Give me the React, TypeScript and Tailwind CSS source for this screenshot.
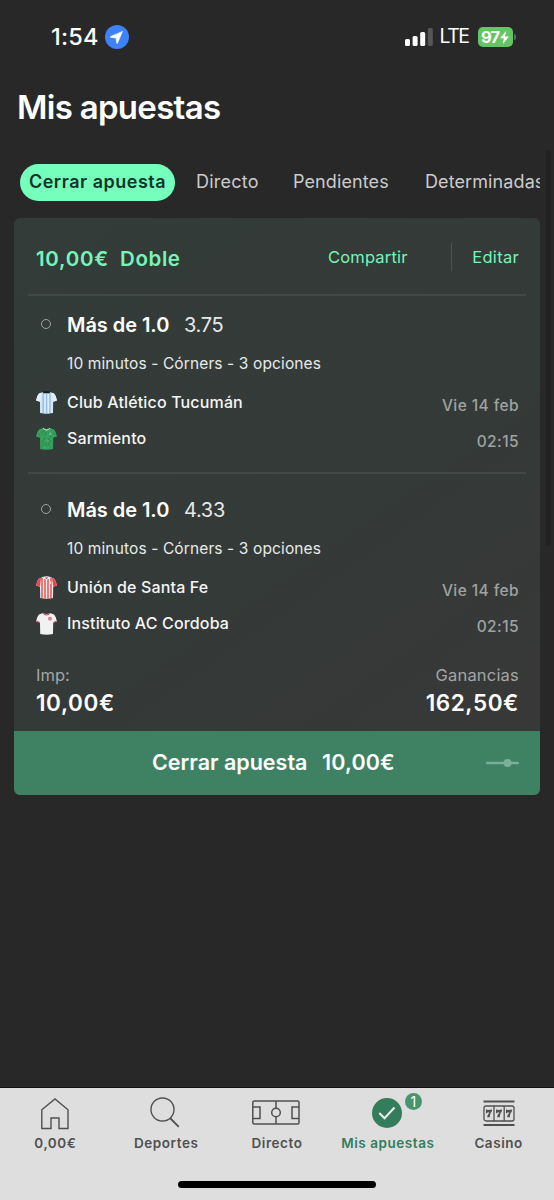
import type { ReactNode } from "react"

type Team = { name: string; shirt: ReactNode; time: string }
type Selection = { pick: string; odds: string; market: string; teams: Team[] }

const SHIRT = "M7 1 Q10.5 3 14 1 L18 2.6 Q20.4 5 21 9.6 L17.2 10.8 L17 22 Q10.5 23.4 4.2 22 L4 10.8 L0 9.6 Q.6 5 3 2.6 Z"
const SLEEVES = "M3 2.6 L5 1.8 L4 10.8 L0 9.6 Q.6 5 3 2.6 Z M18 2.6 L16 1.8 L17.2 10.8 L21 9.6 Q20.4 5 18 2.6 Z"

function Shirt({ fill, children }: { fill: string; children?: ReactNode }) {
  return (
    <svg viewBox="0 0 21 23" className="h-[23px] w-[21px]">
      <path d={SHIRT} fill={fill} />
      {children}
    </svg>
  )
}

const tucuman = (
  <Shirt fill="#b5d6f2">
    <path d={SLEEVES} fill="#e3edf8" />
    <path d="M5 2V22M9 3V22.5M12.2 3V22.5M16 2V22" stroke="#edf4fb" strokeWidth="1.1" />
    <path d="M7.2 2V22M10.6 3V22M13.9 2V22" stroke="#86a9cf" strokeWidth=".6" />
    <path d="M6.8 .6Q10.5 -.2 14.2 .6L13.5 2.2H7.5Z" fill="#15191c" />
  </Shirt>
)

const sarmiento = (
  <Shirt fill="#37a05c">
    <path d="M5 6L8 4L10 7L7 9L9 12L6 14L8 18L5 20M12 6L15 9L12 12L15 14L12 17L15 20M2 6L4 9M17 5L19 8M9 15L11 19" fill="none" stroke="#267f4b" strokeWidth=".7" />
    <path d="M6 10L9 9M11 9L14 7M10 13L13 14M7 20L10 21" stroke="#4caf70" strokeWidth=".8" />
    <path d="M7 1Q10.5 5 14 1" fill="none" stroke="#dce8df" strokeWidth=".9" />
    <circle cx="14.2" cy="6.8" r="1.2" fill="#6fbd88" />
  </Shirt>
)

const union = (
  <Shirt fill="#f4eeee">
    <path d={SLEEVES} fill="#e24a4b" />
    <path d="M6 2V22M9 3V22.5M12 3V22.5M15 2V22" stroke="#df4a4a" strokeWidth="1.4" />
    <path d="M7 .8Q10.5 -.1 14 .8L12.3 3.2H8.7Z" fill="#f5f1f1" />
    <path d="M8.8 1.4H12.2L10.5 3Z" fill="#565154" />
    <circle cx="14.2" cy="6.8" r="1.2" fill="#f5dfd8" />
  </Shirt>
)

const instituto = (
  <Shirt fill="#f1f1f1">
    <path d="M7 1Q10.5 5 14 1" fill="none" stroke="#d33d4b" strokeWidth="1.1" />
    <path d="M.2 9.1L3.9 10.3M17.3 10.3L20.8 9.1" stroke="#cf4654" strokeWidth=".9" />
    <circle cx="14" cy="6.7" r="1.9" fill="#d66b75" />
    <circle cx="14" cy="6.7" r=".7" fill="#efc7ca" />
  </Shirt>
)

const market = "10 minutos - Córners - 3 opciones"

const selections: Selection[] = [
  {
    pick: "Más de 1.0",
    odds: "3.75",
    market,
    teams: [
      { name: "Club Atlético Tucumán", shirt: tucuman, time: "Vie 14 feb" },
      { name: "Sarmiento", shirt: sarmiento, time: "02:15" },
    ],
  },
  {
    pick: "Más de 1.0",
    odds: "4.33",
    market,
    teams: [
      { name: "Unión de Santa Fe", shirt: union, time: "Vie 14 feb" },
      { name: "Instituto AC Cordoba", shirt: instituto, time: "02:15" },
    ],
  },
]

function StatusBar() {
  return (
    <div className="flex h-[74px] items-center pr-[38px] pl-[51px] text-white">
      <span className="w-[54px] text-[23.5px] font-medium tracking-[0.2px]">1:54</span>
      <svg viewBox="0 0 24 24" className="h-6 w-6">
        <circle cx="12" cy="12" r="12" fill="#3d83f7" />
        <path d="M17.5 6.4L5.6 11.6Q4.9 12.2 5.8 12.4L11 13L11.7 18.2Q12 19 12.5 18.2Z" fill="#fff" stroke="#fff" strokeWidth=".6" strokeLinejoin="round" />
      </svg>
      <div className="ml-auto flex items-center">
        <svg viewBox="0 0 28 18" className="h-[18px] w-7">
          <rect y="11" width="5" height="7" rx="1.5" fill="#fff" />
          <rect x="7.6" y="8" width="5" height="10" rx="1.5" fill="#fff" />
          <rect x="15.2" y="4" width="5" height="14" rx="1.5" fill="#fff" />
          <rect x="22.8" width="5" height="18" rx="1.5" fill="#555" />
        </svg>
        <span className="ml-[6.5px] w-[38px] text-[19.5px] tracking-[-1.5px]">LTE</span>
        <div className="flex h-5 w-[35px] items-center justify-center rounded-[5px] bg-[#65c466]">
          <span className="text-[16.5px] font-bold tracking-[-0.9px]">97</span>
          <svg viewBox="0 0 9 13" className="ml-[1px] h-[13px] w-[9px]">
            <path d="M6 0L0 7.2H3.8L2.9 13L9 5.5H5.1Z" fill="#fff" />
          </svg>
        </div>
        <span className="ml-[1.5px] h-[6px] w-[2px] rounded-r-full bg-[#666]" />
      </div>
    </div>
  )
}

function Tabs() {
  return (
    <nav className="mr-[14px] ml-5 flex h-[37px] items-center overflow-hidden text-[18px] leading-[26px] whitespace-nowrap text-[#cbcbcb]">
      <span className="flex h-[37px] w-[155px] shrink-0 items-center justify-center rounded-full bg-[#76ffbc] pb-[2px] font-semibold tracking-[0.5px] text-[#173429]">
        Cerrar apuesta
      </span>
      <span className="ml-[21px] w-[97px] shrink-0 pb-[2px] tracking-[0.25px]">Directo</span>
      <span className="w-[132px] shrink-0 pb-[2px] tracking-[0.1px]">Pendientes</span>
      <span className="shrink-0 pb-[2px] tracking-[0.1px]">Determinadas</span>
    </nav>
  )
}

function SelectionRow({ pick, odds, market, teams }: Selection) {
  return (
    <section className="pt-[13px]">
      <div className="flex h-8 items-center pl-[13px] text-white">
        <span className="-mt-[2px] h-[10px] w-[10px] rounded-full border-[1.5px] border-[#a0a5a3]" />
        <span className="ml-4 w-[117px] pb-[1px] text-[20px] font-semibold tracking-[-0.05px]">{pick}</span>
        <span className="pb-[1px] text-[20px] tracking-[-0.3px] text-[#e8e8e8]">{odds}</span>
      </div>
      <p className="mt-[12px] pl-[39px] text-[15.5px] leading-[22px] tracking-[0.12px] text-[#e8eae9]">{market}</p>
      <div className="mt-[9px] pr-[7px] pl-2">
        {teams.map((team) => (
          <div key={team.name} className="flex h-9 items-center">
            {team.shirt}
            <span className="ml-[10px] pb-[1px] text-[16px] font-medium tracking-[0.15px] text-[#f4f5f5]">{team.name}</span>
            <span className="ml-auto pt-[8px] text-[15.5px] font-medium tracking-[0.4px] text-[#9fa3a1]">{team.time}</span>
          </div>
        ))}
      </div>
    </section>
  )
}

function BetCard() {
  return (
    <main className="mx-[14px] mt-[17px] flex h-[577px] flex-col overflow-hidden rounded-md bg-[linear-gradient(145deg,#333c39_0%,#343a38_55%,#383838_88%)]">
      <header className="flex h-[76px] items-center pt-[5px] pr-[21px] pl-[22px] text-[#76f5b8]">
        <span className="w-[84px] pt-[1px] text-[20.5px] font-semibold tracking-[0.7px]">10,00€</span>
        <span className="pt-[1px] text-[20.5px] font-semibold tracking-[0.6px]">Doble</span>
        <span className="ml-auto pb-[2px] text-[16.5px] tracking-[0.2px]">Compartir</span>
        <span className="mr-5 mb-[4px] ml-[43px] h-7 w-[1.5px] bg-[#4d5350]" />
        <span className="pb-[2px] text-[16.5px] tracking-[0.3px]">Editar</span>
      </header>
      <div className="mx-[14px] h-[178px] border-t-2 border-[#434947]">
        <SelectionRow {...selections[0]} />
      </div>
      <div className="mx-[14px] h-[191px] border-t-2 border-[#434947] pt-[7px]">
        <SelectionRow {...selections[1]} />
      </div>
      <div className="flex h-[68px] justify-between pr-[21px] pl-[22px]">
        <div>
          <p className="text-[16.5px] leading-[24px] text-[#a3a6a5]">Imp:</p>
          <p className="text-[22.5px] leading-[31px] font-semibold tracking-[0.6px] text-white">10,00€</p>
        </div>
        <div className="text-right">
          <p className="text-[16.5px] leading-[24px] tracking-[0.2px] text-[#a3a6a5]">Ganancias</p>
          <p className="text-[22.5px] leading-[31px] font-semibold tracking-[0.6px] text-white">162,50€</p>
        </div>
      </div>
      <button className="flex h-16 items-center bg-[#3e8263] pr-[21px] pl-[138px] text-[21.5px] font-semibold whitespace-nowrap text-white">
        <span className="w-[170px] pb-[1px] text-left">Cerrar apuesta</span>
        <span className="pb-[1px] tracking-[0.15px]">10,00€</span>
        <svg viewBox="0 0 33 8" className="ml-auto h-2 w-[33px]">
          <path d="M1 4H32" stroke="#7aaf98" strokeWidth="2.5" strokeLinecap="round" />
          <circle cx="21.5" cy="4" r="4" fill="#7aaf98" />
        </svg>
      </button>
    </main>
  )
}

function HomeIcon() {
  return (
    <svg viewBox="0 0 28 32" className="h-8 w-7" fill="none" stroke="currentColor" strokeWidth="1.4">
      <path d="M.8 11.8L14 1L27 11.8V30.5H18V20H10V30.5H.8Z" />
    </svg>
  )
}

function SearchIcon() {
  return (
    <svg viewBox="0 0 30 32" className="-mt-[2px] -ml-[2px] h-8 w-[30px]" fill="none" stroke="currentColor" strokeWidth="1.4">
      <circle cx="12.5" cy="12.5" r="11.5" />
      <path d="M20 21L28.8 29.8" strokeWidth="1.8" />
    </svg>
  )
}

function PitchIcon() {
  return (
    <svg viewBox="0 0 48 26" className="-mt-[2px] -ml-[1px] h-[26px] w-12" fill="none" stroke="currentColor" strokeWidth="1.5">
      <rect x=".8" y="1" width="46.2" height="23" rx="1.5" />
      <path d="M1 7H8V18.5H1M47 7H40V18.5H47M24 1V8M24 17V24" />
      <circle cx="24" cy="12.5" r="4.3" />
    </svg>
  )
}

function CheckIcon() {
  return (
    <div className="relative -mt-[3px] mr-[2px]">
      <svg viewBox="0 0 30 30" className="h-[30px] w-[30px]">
        <circle cx="15" cy="15" r="15" fill="#347d5c" />
        <path d="M7.3 15L12.5 20.2L22.5 9.5" fill="none" stroke="#eee" strokeWidth="2" />
      </svg>
      <span className="absolute -top-[5px] left-[33px] flex h-[17px] w-[17px] items-center justify-center rounded-full bg-[#46956f] text-[14px] text-white">
        1
      </span>
    </div>
  )
}

function SlotsIcon() {
  return (
    <svg viewBox="0 0 32 27" className="-mt-[2px] h-[27px] w-8" fill="none" stroke="currentColor" strokeWidth="1.3">
      <path d="M.5 1.5H31.5M.5 25H31.5" strokeWidth="2" />
      <rect x="1" y="6" width="30" height="15" rx="2" />
      <path d="M11 6V21M21.2 6V21" />
      <g fill="currentColor" stroke="none">
        <path d="M3 9.5H3.9L4.5 10L9.2 9.5Q9.3 11.2 7.6 13.2Q6.8 14.5 6.8 17.3H4.2Q4.2 14.5 6.6 12.4H4.6L3.5 13.2H3Z" />
        <path d="M13 9.5H13.9L14.5 10L19.2 9.5Q19.3 11.2 17.6 13.2Q16.8 14.5 16.8 17.3H14.2Q14.2 14.5 16.6 12.4H14.6L13.5 13.2H13Z" />
        <path d="M23 9.5H23.9L24.5 10L29.2 9.5Q29.3 11.2 27.6 13.2Q26.8 14.5 26.8 17.3H24.2Q24.2 14.5 26.6 12.4H24.6L23.5 13.2H23Z" />
      </g>
    </svg>
  )
}

const tabs = [
  { label: "0,00€", icon: <HomeIcon /> },
  { label: "Deportes", icon: <SearchIcon /> },
  { label: "Directo", icon: <PitchIcon /> },
  { label: "Mis apuestas", icon: <CheckIcon />, active: true },
  { label: "Casino", icon: <SlotsIcon /> },
]

function BottomNav() {
  return (
    <footer className="mt-auto h-[113px] border-t border-[#111] bg-[#dedede]">
      <div className="grid grid-cols-5 pt-[9px]">
        {tabs.map((tab) => (
          <div key={tab.label} className={tab.active ? "flex flex-col items-center text-[#347d5c]" : "flex flex-col items-center text-[#505050]"}>
            <div className="flex h-[34px] items-center">{tab.icon}</div>
            <span className="mt-[2px] text-[13.5px] leading-5 font-semibold tracking-[0.55px] whitespace-nowrap">{tab.label}</span>
          </div>
        ))}
      </div>
      <div className="mx-auto mt-[28px] h-[7px] w-[198px] rounded-full bg-black" />
    </footer>
  )
}

export default function App() {
  return (
    <div className="relative flex h-[1200px] w-[554px] flex-col overflow-hidden bg-[#282828] font-['Inter',sans-serif]">
      <StatusBar />
      <h1 className="mt-[8px] mb-[32px] pl-[17px] text-[33px] leading-[50px] font-semibold tracking-[-0.7px] text-white">Mis apuestas</h1>
      <Tabs />
      <BetCard />
      <BottomNav />
      {/* scroll indicator */}
      <div className="absolute top-[150px] right-[3px] h-[396px] w-[5px] rounded-full bg-[#222]" />
    </div>
  )
}
